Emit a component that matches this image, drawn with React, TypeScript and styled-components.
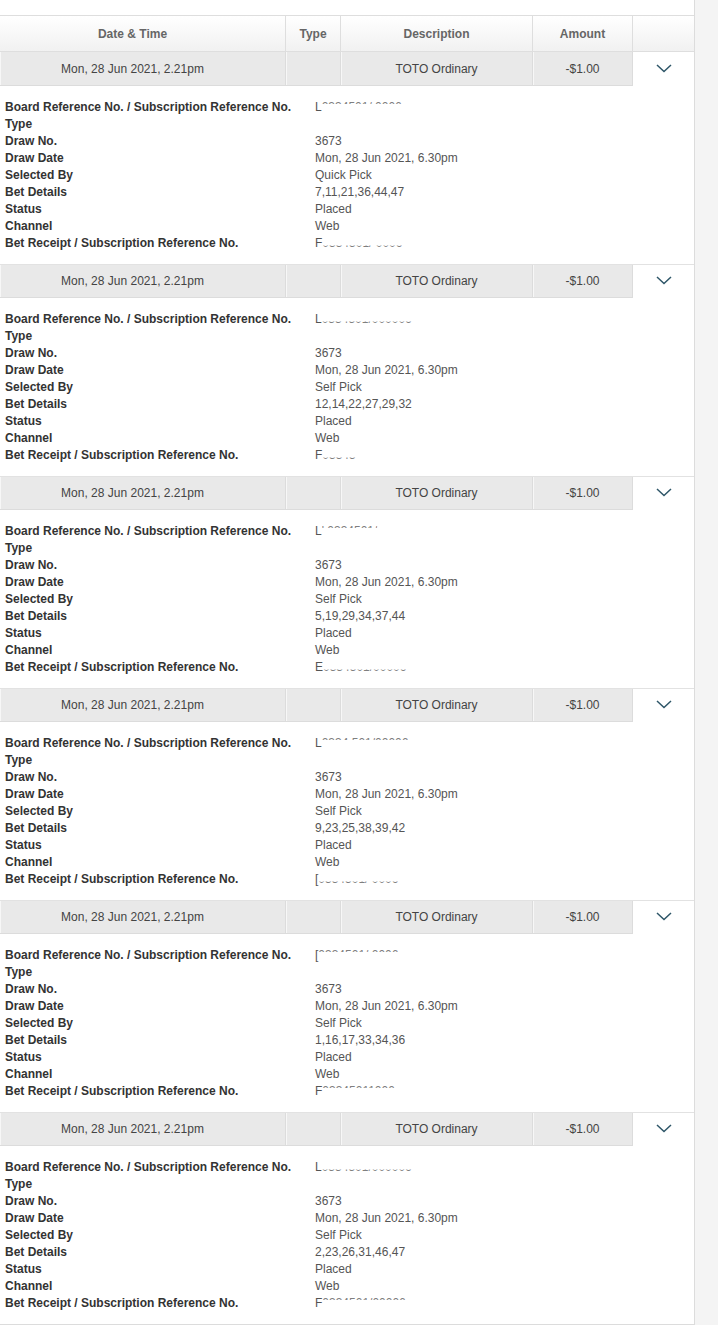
import React from 'react';
import styled, { createGlobalStyle } from 'styled-components';

const GlobalStyle = createGlobalStyle`
  html, body {
    margin: 0;
    padding: 0;
    background: #f4f4f4;
  }
  body {
    font-family: "Liberation Sans", Arial, sans-serif;
    font-size: 12px;
    color: #444;
  }
`;

const COLUMNS = '286px 55px 192px 100px 61px';

const Panel = styled.div`
  width: 694px;
  background: #fff;
  border-right: 1px solid #dcdcdc;
  border-bottom: 1px solid #dcdcdc;
  padding-top: 15px;
`;

const HeaderRow = styled.div`
  display: grid;
  grid-template-columns: ${COLUMNS};
  height: 37px;
  box-sizing: border-box;
  border-top: 1px solid #dedede;
  border-bottom: 1px solid #dedede;
  background: linear-gradient(to bottom, #ffffff 0%, #f1f1f1 100%);
`;

const HeaderCell = styled.div`
  display: flex;
  align-items: center;
  justify-content: center;
  font-weight: bold;
  color: #666;
  border-right: 1px solid #dedede;
  &:first-child {
    padding-right: 20px;
  }
  &:last-child {
    border-right: none;
  }
`;

const SummaryRow = styled.div<{ $first?: boolean }>`
  display: grid;
  grid-template-columns: ${COLUMNS};
  height: 34px;
  box-sizing: border-box;
  border-top: ${(p) => (p.$first ? 'none' : '1px solid #e2e2e2')};
`;

const SummaryCell = styled.div`
  display: flex;
  align-items: center;
  justify-content: center;
  background: #e9e9e9;
  color: #444;
  box-shadow: inset 1px 0 0 #f7f7f7;
  border-right: 1px solid #dcdcdc;
  border-bottom: 1px solid #dcdcdc;
  &:first-child {
    padding-right: 20px;
  }
`;

const ToggleCell = styled.div`
  display: flex;
  align-items: center;
  justify-content: center;
  padding-bottom: 2px;
  svg {
    display: block;
  }
`;

const Details = styled.div`
  display: grid;
  grid-template-columns: 310px 1fr;
  padding: 13px 0 12px 5px;
  line-height: 17px;
`;

const Label = styled.div`
  font-weight: bold;
  color: #333;
  white-space: nowrap;
`;

const Value = styled.div`
  color: #555;
  white-space: nowrap;
  height: 17px;
`;

const Hidden = styled.span<{ $show: 'top' | 'bottom' }>`
  display: inline-block;
  opacity: 0.75;
  clip-path: ${(p) =>
    p.$show === 'top' ? 'inset(0 0 70% 0)' : 'inset(62% 0 0 0)'};
`;

const Chevron = () => (
  <svg width="16" height="9" viewBox="0 0 16 9">
    <polyline
      points="1,1 8,7.5 15,1"
      fill="none"
      stroke="#2e5668"
      strokeWidth="1.5"
    />
  </svg>
);

const Redacted = ({
  lead,
  rest,
  show,
}: {
  lead: string;
  rest: string;
  show: 'top' | 'bottom';
}) => (
  <>
    {lead}
    <Hidden $show={show}>{rest}</Hidden>
  </>
);

type Bet = {
  board: [string, string, 'top' | 'bottom'];
  receipt: [string, string, 'top' | 'bottom'];
  selectedBy: string;
  numbers: string;
};

const bets: Bet[] = [
  {
    board: ['L', '0334501/   0006', 'top'],
    receipt: ['F', ' 0334501/ 0006', 'bottom'],
    selectedBy: 'Quick Pick',
    numbers: '7,11,21,36,44,47',
  },
  {
    board: ['L', '0334501/000006 -', 'bottom'],
    receipt: ['F', '03345', 'bottom'],
    selectedBy: 'Self Pick',
    numbers: '12,14,22,27,29,32',
  },
  {
    board: ['L', "'    0334501/", 'top'],
    receipt: ['E', '0334501/00006', 'bottom'],
    selectedBy: 'Self Pick',
    numbers: '5,19,29,34,37,44',
  },
  {
    board: ['L', ' 0334   501/00006', 'top'],
    receipt: ['[', ' 0334501/   0006', 'bottom'],
    selectedBy: 'Self Pick',
    numbers: '9,23,25,38,39,42',
  },
  {
    board: ['[', ' 0334501/ 0006', 'top'],
    receipt: ['F', '03345011000', 'top'],
    selectedBy: 'Self Pick',
    numbers: '1,16,17,33,34,36',
  },
  {
    board: ['L', '0334501/000006', 'bottom'],
    receipt: ['F', '0334501/00006', 'top'],
    selectedBy: 'Self Pick',
    numbers: '2,23,26,31,46,47',
  },
];

const BetBlock = ({ bet, first }: { bet: Bet; first: boolean }) => {
  const rows: [string, React.ReactNode][] = [
    [
      'Board Reference No. / Subscription Reference No.',
      <Redacted lead={bet.board[0]} rest={bet.board[1]} show={bet.board[2]} />,
    ],
    ['Type', ''],
    ['Draw No.', '3673'],
    ['Draw Date', 'Mon, 28 Jun 2021, 6.30pm'],
    ['Selected By', bet.selectedBy],
    ['Bet Details', bet.numbers],
    ['Status', 'Placed'],
    ['Channel', 'Web'],
    [
      'Bet Receipt / Subscription Reference No.',
      <Redacted
        lead={bet.receipt[0]}
        rest={bet.receipt[1]}
        show={bet.receipt[2]}
      />,
    ],
  ];
  return (
    <div>
      <SummaryRow $first={first}>
        <SummaryCell>Mon, 28 Jun 2021, 2.21pm</SummaryCell>
        <SummaryCell />
        <SummaryCell>TOTO Ordinary</SummaryCell>
        <SummaryCell>-$1.00</SummaryCell>
        <ToggleCell>
          <Chevron />
        </ToggleCell>
      </SummaryRow>
      <Details>
        {rows.map(([label, value]) => (
          <React.Fragment key={label}>
            <Label>{label}</Label>
            <Value>{value}</Value>
          </React.Fragment>
        ))}
      </Details>
    </div>
  );
};

export default function App() {
  return (
    <>
      <GlobalStyle />
      <Panel>
        <HeaderRow>
          <HeaderCell>Date &amp; Time</HeaderCell>
          <HeaderCell>Type</HeaderCell>
          <HeaderCell>Description</HeaderCell>
          <HeaderCell>Amount</HeaderCell>
          <HeaderCell />
        </HeaderRow>
        {bets.map((bet, i) => (
          <BetBlock key={i} bet={bet} first={i === 0} />
        ))}
      </Panel>
    </>
  );
}
